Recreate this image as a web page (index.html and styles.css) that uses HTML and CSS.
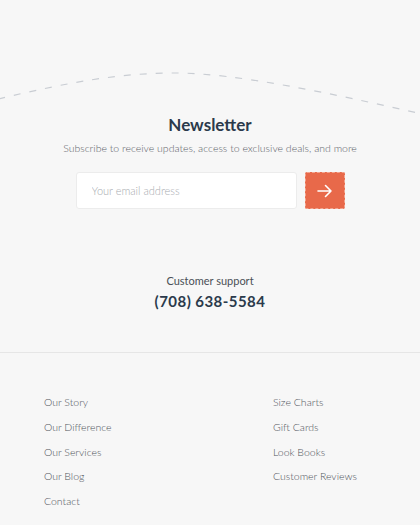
FILE: index.html
```html
<!DOCTYPE html>
<html lang="en">
<head>
<meta charset="utf-8">
<title>Newsletter</title>
<link rel="stylesheet" href="styles.css">
</head>
<body>
<section class="newsletter">
  <svg class="wave" width="420" height="113" viewBox="0 0 420 113" aria-hidden="true">
    <path d="M-2,99 C 70,82 120,73 175,73 C 235,73 330,93 422,114" fill="none" stroke="#c9cdd3" stroke-width="1.2" stroke-dasharray="7 9"/>
  </svg>
  <h2 class="title">Newsletter</h2>
  <p class="subtitle">Subscribe to receive updates, access to exclusive deals, and more</p>
  <form class="form">
    <input class="email" type="email" placeholder="Your email address">
    <button class="submit" type="button" aria-label="Subscribe">
      <svg width="18" height="16" viewBox="0 0 18 16"><path d="M2 8h13M9.5 2.5 15 8l-5.5 5.5" fill="none" stroke="#fff" stroke-width="1.6" stroke-linecap="round" stroke-linejoin="round"/></svg>
    </button>
  </form>
  <p class="support-label">Customer support</p>
  <p class="phone">(708) 638-5584</p>
</section>
<footer class="footer">
  <ul class="links">
    <li>Our Story</li>
    <li>Our Difference</li>
    <li>Our Services</li>
    <li>Our Blog</li>
    <li>Contact</li>
  </ul>
  <ul class="links">
    <li>Size Charts</li>
    <li>Gift Cards</li>
    <li>Look Books</li>
    <li>Customer Reviews</li>
  </ul>
</footer>
</body>
</html>
```

FILE: styles.css
```css
* { box-sizing: border-box; }
html, body { margin: 0; padding: 0; }
body {
  background: #f7f7f7;
  font-family: "Lato", "Open Sans", sans-serif;
  color: #555;
  width: 420px;
  overflow: hidden;
}
.newsletter {
  display: flex;
  flex-direction: column;
  align-items: center;
  padding-bottom: 41px;
  border-bottom: 1px solid #e6e6e6;
}
.wave { display: block; overflow: visible; }
.title {
  margin: 0;
  font-size: 17px;
  line-height: 24px;
  font-weight: 700;
  color: #2b3a4b;
}
.subtitle {
  margin: 3px 0 0;
  font-size: 10.5px;
  line-height: 16px;
  font-weight: 300;
  color: #5e636a;
}
.form {
  display: flex;
  gap: 8px;
  margin-top: 16px;
}
.email {
  width: 221px;
  height: 37px;
  border: 1px solid #ececec;
  border-radius: 3px;
  background: #fff;
  padding: 0 15px;
  font-family: inherit;
  font-size: 11px;
  font-weight: 300;
  color: #333;
}
.email::placeholder { color: #a9acb1; }
.submit {
  width: 40px;
  height: 37px;
  border: 0;
  border-radius: 2px;
  background: #e8694a;
  outline: 1px dashed #f3a690;
  outline-offset: -1px;
  display: flex;
  align-items: center;
  justify-content: center;
  padding: 0;
}
.support-label {
  margin: 64px 0 0;
  font-size: 11px;
  line-height: 16px;
  color: #4a4f56;
}
.phone {
  margin: 2px 0 0;
  font-size: 15px;
  line-height: 20px;
  font-weight: 700;
  color: #2b3a4b;
  letter-spacing: 0.45px;
}
.footer {
  display: grid;
  grid-template-columns: 229px auto;
  padding: 41px 0 0 44px;
}
.links {
  list-style: none;
  margin: 0;
  padding: 0;
  display: flex;
  flex-direction: column;
  gap: 8.8px;
}
.links li {
  font-size: 10.5px;
  line-height: 16px;
  font-weight: 300;
  color: #4f545b;
}
```
